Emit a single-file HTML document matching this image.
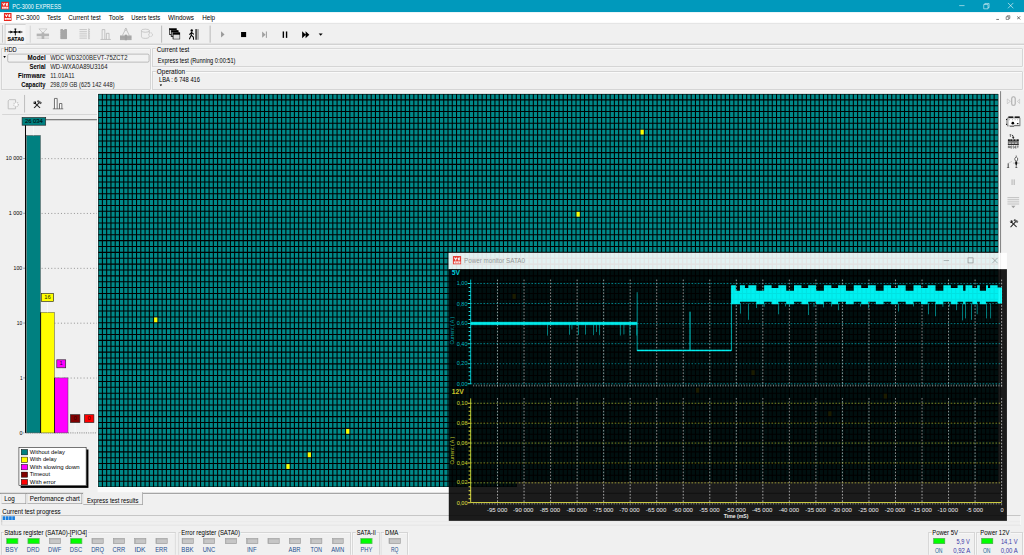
<!DOCTYPE html>
<html><head><meta charset="utf-8"><title>PC-3000 EXPRESS</title>
<style>
html,body{margin:0;padding:0;background:#f0f0f0;}
body{width:1024px;height:555px;overflow:hidden;position:relative;font-family:"Liberation Sans",sans-serif;}
#root{position:absolute;left:0;top:0;width:1920px;height:1040px;transform:scale(0.5333333);transform-origin:0 0;background:#f0f0f0;overflow:hidden;}
#root span{font-family:"Liberation Sans",sans-serif;}
</style></head><body><div id="root">
<div style="position:absolute;left:0.0px;top:0.0px;width:1920.0px;height:23.01px;background:#0099bc;"></div>
<svg style="position:absolute;left:2.06px;top:3.19px;" width="15.38" height="15.19" viewBox="0 0 16 16"><rect x="0" y="0" width="16" height="16" rx="0.800" fill="#e7261c"/><path d="M2.800 3.200L5.400 6.300M7.800 3L5.400 6.300V8.300M9.400 5.200L13 3.200M12.600 3L11.200 8.300M9.600 7h3.600" stroke="#fff" stroke-width="2.100" fill="none" opacity="0.950"/><rect x="2" y="10.200" width="12.200" height="3.900" fill="#fff" opacity="0.950"/><path d="M5.200 11.200v2.900M8.100 12v2.100M11 11.200v2.900" stroke="#e7261c" stroke-width="0.900"/></svg>
<span style="position:absolute;left:23.44px;transform-origin:0 50%;top:1.5px;line-height:20px;font-size:12.4px;width:111.97px;transform:scaleX(0.8279);color:#fff;white-space:pre;">PC-3000 EXPRESS</span>
<svg style="position:absolute;left:1778.06px;top:-1.41px;" width="138.75" height="23.01" viewBox="0 0 138.75 23"><path d="M20.500 11.5h10" stroke="#fff" stroke-width="1" fill="none"/><path d="M66.5 9.500h8v8h-8zM68.5 9.500v-2h8v8h-2" stroke="#fff" stroke-width="1" fill="none"/><path d="M112 6.500l10 10M122 6.500l-10 10" stroke="#fff" stroke-width="1.1" fill="none"/></svg>
<div style="position:absolute;left:0.0px;top:23.01px;width:1920.0px;height:19.93px;background:#fff;"></div>
<svg style="position:absolute;left:7.31px;top:24.38px;" width="15.0" height="15.37" viewBox="0 0 16 16"><rect x="0" y="0" width="16" height="16" rx="0.800" fill="#e7261c"/><path d="M2.800 3.200L5.400 6.300M7.800 3L5.400 6.300V8.300M9.400 5.200L13 3.200M12.600 3L11.200 8.300M9.600 7h3.600" stroke="#fff" stroke-width="2.100" fill="none" opacity="0.950"/><rect x="2" y="10.200" width="12.200" height="3.900" fill="#fff" opacity="0.950"/><path d="M5.200 11.200v2.900M8.100 12v2.100M11 11.200v2.900" stroke="#e7261c" stroke-width="0.900"/></svg>
<span style="position:absolute;left:30.0px;transform-origin:0 50%;top:22.5px;line-height:20px;font-size:12.4px;width:49.94px;transform:scaleX(0.9003);color:#000;white-space:pre;">PC-3000</span>
<span style="position:absolute;left:88.12px;transform-origin:0 50%;top:22.5px;line-height:20px;font-size:12.4px;width:29.94px;transform:scaleX(0.907);color:#000;white-space:pre;">Tests</span>
<span style="position:absolute;left:128.44px;transform-origin:0 50%;top:22.5px;line-height:20px;font-size:12.4px;width:65.78px;transform:scaleX(0.9407);color:#000;white-space:pre;">Current test</span>
<span style="position:absolute;left:204.38px;transform-origin:0 50%;top:22.5px;line-height:20px;font-size:12.4px;width:29.95px;transform:scaleX(0.9716);color:#000;white-space:pre;">Tools</span>
<span style="position:absolute;left:246.09px;transform-origin:0 50%;top:22.5px;line-height:20px;font-size:12.4px;width:63.01px;transform:scaleX(0.8768);color:#000;white-space:pre;">Users tests</span>
<span style="position:absolute;left:315.0px;transform-origin:0 50%;top:22.5px;line-height:20px;font-size:12.4px;width:51.3px;transform:scaleX(0.9691);color:#000;white-space:pre;">Windows</span>
<span style="position:absolute;left:378.75px;transform-origin:0 50%;top:22.5px;line-height:20px;font-size:12.4px;width:26.5px;transform:scaleX(0.9558);color:#000;white-space:pre;">Help</span>
<svg style="position:absolute;left:1860.0px;top:23.01px;" width="60.0" height="19.93" viewBox="0 0 60 20"><path d="M8 13.500h5" stroke="#333" stroke-width="1.3" fill="none"/><path d="M26.5 8.500h5v5h-5zM28.5 8.500v-2h5v5h-2" stroke="#333" stroke-width="1" fill="none"/><path d="M47 7.500l6 6M53 7.500l-6 6" stroke="#333" stroke-width="1.3" fill="none"/></svg>
<div style="position:absolute;left:0.0px;top:42.94px;width:1920.0px;height:39.56px;background:#f0f0f0;border-top:1px solid #d9d9d9;box-sizing:border-box;"></div>
<div style="position:absolute;left:0.0px;top:82.22px;width:1920.0px;height:1.78px;background:#c0c0c0;"></div>
<div style="position:absolute;left:0.0px;top:84.0px;width:1920.0px;height:2.06px;background:#f9f9f9;"></div>
<div style="position:absolute;left:3.75px;top:46.88px;width:1.13px;height:33.19px;background:#aaa;"></div>
<div style="position:absolute;left:9.38px;top:45.0px;width:38.25px;height:36.75px;background:#f6f6f6;border-left:1px solid #b4b4b4;border-top:1px solid #b4b4b4;box-sizing:border-box;"></div>
<svg style="position:absolute;left:9.38px;top:47.25px;" width="39.38" height="35.25" viewBox="0 0 39.4 35.25"><path d="M6.500 13h26.500" stroke="#000" stroke-width="2.200" fill="none"/><path d="M19.800 7v12.500M18 7.500h3.600" stroke="#000" stroke-width="1.700" fill="none"/><path d="M14.500 13l-4-2.800v5.600zM25 13l4-2.800v5.600z" fill="#000"/><path d="M17.800 11.200h4v3.600h-4z" fill="#000"/></svg>
<span style="position:absolute;left:13.88px;transform-origin:0 50%;top:63.19px;line-height:20px;font-size:10.5px;width:33.87px;transform:scaleX(0.9356);color:#000;white-space:pre;font-weight:bold;-webkit-text-stroke:0.35px #000;">SATA0</span>
<div style="position:absolute;left:55.78px;top:47.62px;width:1.69px;height:32.62px;background:#bdbdbd;"></div>
<div style="position:absolute;left:302.16px;top:47.62px;width:1.69px;height:32.62px;background:#bdbdbd;"></div>
<div style="position:absolute;left:393.28px;top:47.62px;width:1.69px;height:32.62px;background:#bdbdbd;"></div>
<svg style="position:absolute;left:67.5px;top:53.06px;" width="24.94" height="21.19" viewBox="0 0 24.94 21.19"><path d="M5 1h15l-7.500 8z" fill="none" stroke="#b4b4b4" stroke-width="1.2"/><rect x="0.500" y="10" width="24" height="5" fill="#b4b4b4"/><rect x="10" y="8" width="5" height="12" fill="#b4b4b4"/><path d="M1 18.500h23" stroke="#b4b4b4" stroke-width="1.2"/></svg>
<svg style="position:absolute;left:111.75px;top:53.06px;" width="14.63" height="21.19" viewBox="0 0 14.63 21.19"><path d="M0.500 4.500h13.600M0.500 8h13.600M0.500 11.500h13.600M0.500 15h13.600M0.500 18.200h13.600" stroke="#cbcbcb" stroke-width="1"/><rect x="1.200" y="1.500" width="12.400" height="19" rx="1.200" fill="#a6a6a6"/><circle cx="7.300" cy="1.500" r="1.600" fill="#f0f0f0"/></svg>
<svg style="position:absolute;left:147.75px;top:53.06px;" width="21.38" height="21.19" viewBox="0 0 21.38 21.19"><path d="M1 2.500h14M1 6.500h14M1 10.500h14M1 14.500h14M1 18.500h14" stroke="#b4b4b4" stroke-width="1.3"/><path d="M18.500 0v21" stroke="#b4b4b4" stroke-width="1.5"/><path d="M19 2.500h2M19 6.500h2M19 10.500h2M19 14.500h2M19 18.500h2" stroke="#b4b4b4" stroke-width="1.3"/></svg>
<svg style="position:absolute;left:187.5px;top:54.38px;" width="20.62" height="21.19" viewBox="0 0 20.62 21.19"><path d="M3.500 19.500v-18h5v18M11.500 19.500v-11h5v11M0 20h20" stroke="#b0b0b0" stroke-width="1.3" fill="none"/></svg>
<svg style="position:absolute;left:225.38px;top:51.75px;" width="22.12" height="24.38" viewBox="0 0 22.12 24.38"><path d="M11 1.500l-6.500 13M11 1.500l6.500 13M11 0v4" stroke="#a8a8a8" stroke-width="1.200" fill="none"/><circle cx="11" cy="3.500" r="1.700" fill="#f0f0f0" stroke="#a8a8a8" stroke-width="1"/><rect x="0" y="15" width="22" height="7.500" fill="#b2b2b2"/><path d="M0 15.500h22M0 19h22M0 22.500h22" stroke="#8e8e8e" stroke-width="1"/><rect x="9" y="13" width="4" height="11" fill="#a0a0a0"/></svg>
<svg style="position:absolute;left:264.38px;top:53.06px;" width="22.87" height="21.19" viewBox="0 0 22.87 21.19"><path d="M1 4.500v11c0 2 3 3.500 7.500 3.500s7.500-1.500 7.500-3.500v-11" fill="none" stroke="#b4b4b4" stroke-width="1.200"/><ellipse cx="8.500" cy="4.500" rx="7.500" ry="3" fill="none" stroke="#b4b4b4" stroke-width="1.200"/><circle cx="18.500" cy="12" r="3.500" fill="#f0f0f0" stroke="#b4b4b4" stroke-width="1.200" stroke-dasharray="2 1"/></svg>
<svg style="position:absolute;left:316.88px;top:52.5px;" width="21.19" height="21.37" viewBox="0 0 21.19 21.37"><rect x="0.500" y="0.500" width="13" height="11" fill="#fff" stroke="#000" stroke-width="1.400"/><rect x="0.500" y="0.500" width="13" height="3" fill="#000"/><rect x="4" y="4.500" width="13" height="11" fill="#bbb" stroke="#000" stroke-width="1.400"/><rect x="4" y="4.500" width="13" height="3" fill="#000"/><rect x="7.500" y="8.500" width="13" height="12" fill="#ddd" stroke="#000" stroke-width="1.400"/><rect x="7.500" y="8.500" width="13" height="3.500" fill="#000"/></svg>
<svg style="position:absolute;left:354.38px;top:53.62px;" width="20.25" height="21.0" viewBox="0 0 20.25 21.0"><circle cx="5.500" cy="3" r="2.200" fill="#000"/><path d="M5.500 5l-1 7-3.500 7.500M4.500 12l4 3.500 0.500 5M5 7l-4 4M5.500 7l4 3.500" stroke="#000" stroke-width="2" fill="none"/><rect x="12" y="0.500" width="4" height="20" fill="#555"/><rect x="16" y="0.500" width="3" height="20" fill="#aaa"/></svg>
<svg style="position:absolute;left:408.75px;top:52.5px;" width="202.5" height="22.5" viewBox="0 0 202.5 22.5"><path d="M5.500 5.500l6.500 6-6.500 6z" fill="#9a9a9a"/><rect x="43" y="7" width="9.500" height="9.500" fill="#000"/><path d="M82.500 6l6.500 6-6.500 6z" fill="#a0a0a0"/><rect x="89.500" y="6" width="2" height="12" fill="#a0a0a0"/><rect x="121" y="6" width="2.600" height="12" fill="#000"/><rect x="127" y="6" width="2.600" height="12" fill="#000"/><path d="M157.500 5.500l7 6.500-7 6.500zM164 5.500l7 6.500-7 6.500z" fill="#000"/><path d="M188.500 10h7.500l-3.750 4z" fill="#000"/></svg>
<div style="position:absolute;left:1.5px;top:90.75px;width:281.25px;height:77.06px;border:1.400px solid #bdbdbd;box-sizing:border-box;box-shadow:1.200px 1.200px 0 #fdfdfd, inset 1.200px 1.200px 0 #fdfdfd;"></div>
<div style="position:absolute;left:6.56px;top:85.12px;width:27.19px;height:11.25px;background:#f0f0f0;"></div>
<span style="position:absolute;left:8.44px;transform-origin:0 50%;top:82.5px;line-height:20px;font-size:11.8px;width:26.57px;transform:scaleX(0.9168);color:#000;white-space:pre;">HDD</span>
<div style="position:absolute;left:285.38px;top:90.75px;width:1633.12px;height:34.69px;border:1.400px solid #bdbdbd;box-sizing:border-box;box-shadow:1.200px 1.200px 0 #fdfdfd, inset 1.200px 1.200px 0 #fdfdfd;"></div>
<div style="position:absolute;left:292.03px;top:85.12px;width:64.78px;height:11.25px;background:#f0f0f0;"></div>
<span style="position:absolute;left:293.91px;transform-origin:0 50%;top:82.5px;line-height:20px;font-size:11.8px;width:62.65px;transform:scaleX(0.99);color:#000;white-space:pre;">Current test</span>
<div style="position:absolute;left:285.38px;top:134.25px;width:1633.12px;height:33.56px;border:1.400px solid #bdbdbd;box-sizing:border-box;box-shadow:1.200px 1.200px 0 #fdfdfd, inset 1.200px 1.200px 0 #fdfdfd;"></div>
<div style="position:absolute;left:292.03px;top:128.62px;width:56.72px;height:11.25px;background:#f0f0f0;"></div>
<span style="position:absolute;left:293.91px;transform-origin:0 50%;top:124.88px;line-height:20px;font-size:11.8px;width:52.82px;transform:scaleX(1.0221);color:#000;white-space:pre;">Operation</span>
<div style="position:absolute;left:14.25px;top:100.69px;width:266.06px;height:16.12px;border:1.300px solid #8c8c8c;border-radius:3px;box-sizing:border-box;background:#f2f2f2;"></div>
<svg style="position:absolute;left:6.0px;top:105.38px;" width="5.25" height="4.12" viewBox="0 0 5.2 4"><path d="M0 0h5.200l-2.600 3.600z" fill="#000"/></svg>
<span style="position:absolute;left:50.84px;transform-origin:100% 50%;top:97.69px;line-height:20px;font-size:12px;width:35.66px;transform:scaleX(0.979);color:#000;white-space:pre;font-weight:bold;">Model</span>
<span style="position:absolute;left:94.12px;transform-origin:0 50%;top:97.69px;line-height:20px;font-size:12px;width:157.71px;transform:scaleX(0.9261);color:#222;white-space:pre;">WDC WD3200BEVT-75ZCT2</span>
<span style="position:absolute;left:52.81px;transform-origin:100% 50%;top:115.88px;line-height:20px;font-size:12px;width:33.69px;transform:scaleX(0.9349);color:#000;white-space:pre;font-weight:bold;">Serial</span>
<span style="position:absolute;left:94.12px;transform-origin:0 50%;top:115.88px;line-height:20px;font-size:12px;width:115.71px;transform:scaleX(0.9382);color:#222;white-space:pre;">WD-WXA0A89U3164</span>
<span style="position:absolute;left:32.15px;transform-origin:100% 50%;top:132.94px;line-height:20px;font-size:12px;width:54.35px;transform:scaleX(0.9699);color:#000;white-space:pre;font-weight:bold;">Firmware</span>
<span style="position:absolute;left:94.12px;transform-origin:0 50%;top:132.94px;line-height:20px;font-size:12px;width:50.6px;transform:scaleX(0.9224);color:#222;white-space:pre;">11.01A11</span>
<span style="position:absolute;left:35.48px;transform-origin:100% 50%;top:150.0px;line-height:20px;font-size:12px;width:51.02px;transform:scaleX(0.9071);color:#000;white-space:pre;font-weight:bold;">Capacity</span>
<span style="position:absolute;left:94.12px;transform-origin:0 50%;top:150.0px;line-height:20px;font-size:12px;width:136.44px;transform:scaleX(0.8916);color:#222;white-space:pre;">298,09 GB (625 142 448)</span>
<span style="position:absolute;left:295.69px;transform-origin:0 50%;top:103.5px;line-height:20px;font-size:12px;width:166.43px;transform:scaleX(0.8795);color:#000;white-space:pre;">Express test (Running 0:00:51)</span>
<span style="position:absolute;left:297.75px;transform-origin:0 50%;top:139.5px;line-height:20px;font-size:12px;width:86.41px;transform:scaleX(0.9023);color:#000;white-space:pre;">LBA : 6 748 416</span>
<svg style="position:absolute;left:298.69px;top:158.06px;" width="5.25" height="4.13" viewBox="0 0 5.2 4"><path d="M0 0h5.200l-2.600 3.600z" fill="#000"/></svg>
<svg style="position:absolute;left:13.12px;top:183.75px;" width="26.25" height="24.38" viewBox="0 0 14 13"><path d="M1.250 2.700L2.450 1.550H8.600V4.300M1.250 2.700V10.700H8.600V8.600" fill="none" stroke="#b6b6b6" stroke-width="0.800"/><circle cx="9.150" cy="6.350" r="2.300" fill="#f3f3f3" stroke="#c2c2c2" stroke-width="1.200" stroke-dasharray="0.900 0.900"/><circle cx="9.150" cy="6.350" r="0.950" fill="#fdfdfd"/></svg>
<div style="position:absolute;left:45.09px;top:178.12px;width:1.69px;height:33.37px;background:#c0c0c0;"></div>
<svg style="position:absolute;left:60.94px;top:186.56px;" width="18.75" height="16.88" viewBox="0 0 10 9"><path d="M2.920 3.880L7.220 7.980" stroke="#2a2a2a" stroke-width="1.050" stroke-linecap="round" fill="none"/><path d="M6.830 2.700L1.750 8.170" stroke="#2a2a2a" stroke-width="1.050" stroke-linecap="round" fill="none"/><circle cx="2.200" cy="2.950" r="1.350" fill="#000"/><circle cx="1.550" cy="2.250" r="0.750" fill="#f0f0f0"/><path d="M4.900 1.100L8.800 3.550" stroke="#4a4a4a" stroke-width="2" fill="none"/><path d="M5.300 0.900L9.100 3.250" stroke="#9a9a9a" stroke-width="0.500" fill="none"/></svg>
<svg style="position:absolute;left:98.44px;top:183.38px;" width="21.56" height="22.88" viewBox="0 0 11.5 12.2"><path d="M2.200 11.300V0.800H4.900V11.300M7.250 11.300V5.900H9.600V11.300" stroke="#5c5c5c" stroke-width="0.850" fill="#fafafa"/><path d="M0.500 11.300H11" stroke="#5c5c5c" stroke-width="0.850"/></svg>
<div style="position:absolute;left:3.75px;top:213.66px;width:178.5px;height:1.69px;background:#c0c0c0;"></div>
<svg style="position:absolute;left:0.0px;top:215.62px;" width="183.75" height="609.38" viewBox="0 0 183.75 609.38"><path d="M85.69 8.53H183.0" stroke="#383838" stroke-width="1.500" fill="none"/><path d="M182.06 8.53V595.69" stroke="#c4c4c4" stroke-width="1" fill="none"/><path d="M77.94 81.47H181.88" stroke="#5c5c5c" stroke-width="1.150" stroke-dasharray="1.900 4.162" fill="none"/><path d="M43.5 81.19H47.62" stroke="#555" stroke-width="1" fill="none"/><path d="M77.94 184.22H181.88" stroke="#5c5c5c" stroke-width="1.150" stroke-dasharray="1.900 4.162" fill="none"/><path d="M43.5 183.94H47.62" stroke="#555" stroke-width="1" fill="none"/><path d="M77.94 287.16H181.88" stroke="#5c5c5c" stroke-width="1.150" stroke-dasharray="1.900 4.162" fill="none"/><path d="M43.5 286.88H47.62" stroke="#555" stroke-width="1" fill="none"/><path d="M77.94 390.0H181.88" stroke="#5c5c5c" stroke-width="1.150" stroke-dasharray="1.900 4.162" fill="none"/><path d="M43.5 389.72H47.62" stroke="#555" stroke-width="1" fill="none"/><path d="M77.94 492.84H181.88" stroke="#5c5c5c" stroke-width="1.150" stroke-dasharray="1.900 4.162" fill="none"/><path d="M43.5 492.56H47.62" stroke="#555" stroke-width="1" fill="none"/><path d="M43.5 595.69H181.88" stroke="#666" stroke-width="1.400" stroke-dasharray="2 2.200" fill="none"/><rect x="49.69" y="38.06" width="26.06" height="557.62" fill="#008080" stroke="#4a4a4a" stroke-width="0.900"/><rect x="76.69" y="369.75" width="25.31" height="225.94" fill="#ffff00" stroke="#4a4a4a" stroke-width="0.900"/><rect x="102.0" y="492.56" width="25.5" height="103.12" fill="#ff00ff" stroke="#4a4a4a" stroke-width="0.900"/><rect x="75.09" y="369.75" width="1.5" height="225.94" fill="#000"/><rect x="101.25" y="492.56" width="1.31" height="103.12" fill="#000"/><path d="M47.81 17.81V595.69" stroke="#000" stroke-width="1.875" fill="none"/><path d="M62.62 18.75V38.06" stroke="#fff" stroke-width="1" fill="none"/><path d="M89.06 349.31V369.75" stroke="#fff" stroke-width="1" fill="none"/><path d="M114.75 473.63V492.56" stroke="#fff" stroke-width="1" fill="none"/><path d="M140.81 576.19V595.31" stroke="#fff" stroke-width="1" fill="none"/><path d="M167.25 576.19V595.31" stroke="#fff" stroke-width="1" fill="none"/><rect x="41.44" y="4.31" width="44.25" height="14.44" fill="#008080" stroke="#222" stroke-width="1.200"/><rect x="77.44" y="334.31" width="23.06" height="15.0" fill="#ffff00" stroke="#222" stroke-width="1.200"/><rect x="106.5" y="458.63" width="16.69" height="15.0" fill="#ff00ff" stroke="#222" stroke-width="1.200"/><rect x="132.0" y="561.56" width="17.81" height="14.63" fill="#800000" stroke="#222" stroke-width="1.200"/><rect x="158.25" y="561.56" width="17.81" height="14.63" fill="#ff0000" stroke="#222" stroke-width="1.200"/></svg>
<span style="position:absolute;left:46.74px;transform-origin:50% 50%;top:216.75px;line-height:20px;font-size:11px;width:34.65px;transform:scaleX(1.0);color:#001414;white-space:pre;-webkit-text-stroke:0.250px #001414;">26 034</span>
<span style="position:absolute;left:82.85px;transform-origin:50% 50%;top:546.94px;line-height:20px;font-size:11px;width:13.24px;transform:scaleX(1.0);color:#220;white-space:pre;">16</span>
<span style="position:absolute;left:111.78px;transform-origin:50% 50%;top:671.25px;line-height:20px;font-size:11px;width:7.12px;transform:scaleX(1.0);color:#303;white-space:pre;">1</span>
<span style="position:absolute;left:137.85px;transform-origin:50% 50%;top:774.0px;line-height:20px;font-size:11px;width:7.12px;transform:scaleX(1.0);color:#300;white-space:pre;">0</span>
<span style="position:absolute;left:164.1px;transform-origin:50% 50%;top:774.0px;line-height:20px;font-size:11px;width:7.12px;transform:scaleX(1.0);color:#400;white-space:pre;">0</span>
<span style="position:absolute;left:7.97px;transform-origin:100% 50%;top:286.31px;line-height:20px;font-size:11px;width:34.65px;transform:scaleX(0.9251);color:#000;white-space:pre;">10 000</span>
<span style="position:absolute;left:14.09px;transform-origin:100% 50%;top:389.06px;line-height:20px;font-size:11px;width:28.53px;transform:scaleX(0.9195);color:#000;white-space:pre;">1 000</span>
<span style="position:absolute;left:23.27px;transform-origin:100% 50%;top:492.0px;line-height:20px;font-size:11px;width:19.35px;transform:scaleX(0.8786);color:#000;white-space:pre;">100</span>
<span style="position:absolute;left:29.38px;transform-origin:100% 50%;top:594.84px;line-height:20px;font-size:11px;width:13.24px;transform:scaleX(0.8275);color:#000;white-space:pre;">10</span>
<span style="position:absolute;left:35.5px;transform-origin:100% 50%;top:697.69px;line-height:20px;font-size:11px;width:7.12px;transform:scaleX(0.7968);color:#000;white-space:pre;">1</span>
<span style="position:absolute;left:35.5px;transform-origin:100% 50%;top:800.81px;line-height:20px;font-size:11px;width:7.12px;transform:scaleX(0.9194);color:#000;white-space:pre;">0</span>
<div style="position:absolute;left:35.06px;top:839.06px;width:127.31px;height:72.19px;background:#fff;border:1px solid #000;box-sizing:border-box;box-shadow:3.800px 3.800px 0 #000;"></div>
<svg style="position:absolute;left:39.38px;top:841.5px;" width="13.5" height="12.0" viewBox="0 0 13.5 12"><rect x="0.850" y="1" width="11.800" height="10" fill="#008080" stroke="#111" stroke-width="1.100"/></svg>
<span style="position:absolute;left:56.06px;transform-origin:0 50%;top:837.0px;line-height:20px;font-size:11px;width:67.65px;transform:scaleX(0.9819);color:#000;white-space:pre;">Without delay</span>
<svg style="position:absolute;left:39.38px;top:855.56px;" width="13.5" height="12.0" viewBox="0 0 13.5 12"><rect x="0.850" y="1" width="11.800" height="10" fill="#ffff00" stroke="#111" stroke-width="1.100"/></svg>
<span style="position:absolute;left:56.06px;transform-origin:0 50%;top:851.06px;line-height:20px;font-size:11px;width:52.35px;transform:scaleX(0.9749);color:#000;white-space:pre;">With delay</span>
<svg style="position:absolute;left:39.38px;top:869.62px;" width="13.5" height="12.0" viewBox="0 0 13.5 12"><rect x="0.850" y="1" width="11.800" height="10" fill="#ff00ff" stroke="#111" stroke-width="1.100"/></svg>
<span style="position:absolute;left:56.06px;transform-origin:0 50%;top:865.12px;line-height:20px;font-size:11px;width:92.1px;transform:scaleX(1.023);color:#000;white-space:pre;">With slowing down</span>
<svg style="position:absolute;left:39.38px;top:883.69px;" width="13.5" height="12.0" viewBox="0 0 13.5 12"><rect x="0.850" y="1" width="11.800" height="10" fill="#800000" stroke="#111" stroke-width="1.100"/></svg>
<span style="position:absolute;left:56.06px;transform-origin:0 50%;top:879.19px;line-height:20px;font-size:11px;width:40.33px;transform:scaleX(0.9583);color:#000;white-space:pre;">Timeout</span>
<svg style="position:absolute;left:39.38px;top:897.75px;" width="13.5" height="12.0" viewBox="0 0 13.5 12"><rect x="0.850" y="1" width="11.800" height="10" fill="#ff0000" stroke="#111" stroke-width="1.100"/></svg>
<span style="position:absolute;left:56.06px;transform-origin:0 50%;top:893.25px;line-height:20px;font-size:11px;width:49.28px;transform:scaleX(1.0058);color:#000;white-space:pre;">With error</span>
<div style="position:absolute;left:182.44px;top:174.38px;width:1691.81px;height:740.62px;background:#fafafa;"></div>
<svg style="position:absolute;left:184px;top:176px" width="1688" height="737" viewBox="0 0 1688 737"><g transform="translate(0,0.22)"><rect x="0" y="0" width="1688" height="726" fill="#008989"/><rect x="0" y="726" width="784" height="11" fill="#008989"/><path d="M0 0V737M8 0V737M16 0V737M24 0V737M32 0V737M40 0V737M48 0V737M56 0V737M64 0V737M72 0V737M80 0V737M88 0V737M96 0V737M104 0V737M112 0V737M120 0V737M128 0V737M136 0V737M144 0V737M152 0V737M160 0V737M168 0V737M176 0V737M184 0V737M192 0V737M200 0V737M208 0V737M216 0V737M224 0V737M232 0V737M240 0V737M248 0V737M256 0V737M264 0V737M272 0V737M280 0V737M288 0V737M296 0V737M304 0V737M312 0V737M320 0V737M328 0V737M336 0V737M344 0V737M352 0V737M360 0V737M368 0V737M376 0V737M384 0V737M392 0V737M400 0V737M408 0V737M416 0V737M424 0V737M432 0V737M440 0V737M448 0V737M456 0V737M464 0V737M472 0V737M480 0V737M488 0V737M496 0V737M504 0V737M512 0V737M520 0V737M528 0V737M536 0V737M544 0V737M552 0V737M560 0V737M568 0V737M576 0V737M584 0V737M592 0V737M600 0V737M608 0V737M616 0V737M624 0V737M632 0V737M640 0V737M648 0V737M656 0V737M664 0V737M672 0V737M680 0V737M688 0V737M696 0V737M704 0V737M712 0V737M720 0V737M728 0V737M736 0V737M744 0V737M752 0V737M760 0V737M768 0V737M776 0V737M784 0V737M792 0V726M800 0V726M808 0V726M816 0V726M824 0V726M832 0V726M840 0V726M848 0V726M856 0V726M864 0V726M872 0V726M880 0V726M888 0V726M896 0V726M904 0V726M912 0V726M920 0V726M928 0V726M936 0V726M944 0V726M952 0V726M960 0V726M968 0V726M976 0V726M984 0V726M992 0V726M1000 0V726M1008 0V726M1016 0V726M1024 0V726M1032 0V726M1040 0V726M1048 0V726M1056 0V726M1064 0V726M1072 0V726M1080 0V726M1088 0V726M1096 0V726M1104 0V726M1112 0V726M1120 0V726M1128 0V726M1136 0V726M1144 0V726M1152 0V726M1160 0V726M1168 0V726M1176 0V726M1184 0V726M1192 0V726M1200 0V726M1208 0V726M1216 0V726M1224 0V726M1232 0V726M1240 0V726M1248 0V726M1256 0V726M1264 0V726M1272 0V726M1280 0V726M1288 0V726M1296 0V726M1304 0V726M1312 0V726M1320 0V726M1328 0V726M1336 0V726M1344 0V726M1352 0V726M1360 0V726M1368 0V726M1376 0V726M1384 0V726M1392 0V726M1400 0V726M1408 0V726M1416 0V726M1424 0V726M1432 0V726M1440 0V726M1448 0V726M1456 0V726M1464 0V726M1472 0V726M1480 0V726M1488 0V726M1496 0V726M1504 0V726M1512 0V726M1520 0V726M1528 0V726M1536 0V726M1544 0V726M1552 0V726M1560 0V726M1568 0V726M1576 0V726M1584 0V726M1592 0V726M1600 0V726M1608 0V726M1616 0V726M1624 0V726M1632 0V726M1640 0V726M1648 0V726M1656 0V726M1664 0V726M1672 0V726M1680 0V726M1688 0V726M0 0H1688M0 11H1688M0 22H1688M0 33H1688M0 44H1688M0 55H1688M0 66H1688M0 77H1688M0 88H1688M0 99H1688M0 110H1688M0 121H1688M0 132H1688M0 143H1688M0 154H1688M0 165H1688M0 176H1688M0 187H1688M0 198H1688M0 209H1688M0 220H1688M0 231H1688M0 242H1688M0 253H1688M0 264H1688M0 275H1688M0 286H1688M0 297H1688M0 308H1688M0 319H1688M0 330H1688M0 341H1688M0 352H1688M0 363H1688M0 374H1688M0 385H1688M0 396H1688M0 407H1688M0 418H1688M0 429H1688M0 440H1688M0 451H1688M0 462H1688M0 473H1688M0 484H1688M0 495H1688M0 506H1688M0 517H1688M0 528H1688M0 539H1688M0 550H1688M0 561H1688M0 572H1688M0 583H1688M0 594H1688M0 605H1688M0 616H1688M0 627H1688M0 638H1688M0 649H1688M0 660H1688M0 671H1688M0 682H1688M0 693H1688M0 704H1688M0 715H1688M0 726H1688M0 737H784" stroke="#000" stroke-width="2" fill="none" shape-rendering="geometricPrecision"/><rect x="1017" y="67" width="6" height="9" fill="#ffff00"/><rect x="897" y="221" width="6" height="9" fill="#ffff00"/><rect x="105" y="419" width="6" height="9" fill="#ffff00"/><rect x="465" y="628" width="6" height="9" fill="#ffff00"/><rect x="393" y="672" width="6" height="9" fill="#ffff00"/><rect x="353" y="694" width="6" height="9" fill="#ffff00"/><rect x="777" y="375" width="6" height="9" fill="#ffff00"/><rect x="1225" y="518" width="6" height="9" fill="#ffff00"/><rect x="1121" y="551" width="6" height="9" fill="#ffff00"/><rect x="1473" y="562" width="6" height="9" fill="#ffff00"/><rect x="1369" y="595" width="6" height="9" fill="#ffff00"/></g></svg>
<div style="position:absolute;left:1873.12px;top:171.0px;width:1.88px;height:747.75px;background:#f6f6f6;"></div>
<div style="position:absolute;left:1875.0px;top:171.0px;width:1.88px;height:747.75px;background:#878787;"></div>
<svg style="position:absolute;left:1887.19px;top:179.62px;" width="26.25" height="19.13" viewBox="0 0 26.25 19.1"><path d="M1.500 5.500l6 4.500-6 4.500zM25 6l-4.500 4 4.500 4z" fill="none" stroke="#b9b9b9" stroke-width="1.200"/><rect x="10" y="1.500" width="6.500" height="16" rx="3.200" fill="none" stroke="#aaa" stroke-width="2"/></svg>
<svg style="position:absolute;left:1885.31px;top:216.56px;" width="30.0" height="22.5" viewBox="0 0 16 12"><rect x="3" y="0.700" width="5" height="1.700" fill="#000"/><rect x="9.300" y="0.700" width="5.100" height="1.700" fill="#000"/><rect x="2.100" y="2.300" width="12.600" height="7.900" fill="#fff" stroke="#6e6e6e" stroke-width="0.550"/><rect x="0.900" y="3" width="1.150" height="6.400" fill="#9a9a9a"/><rect x="0.800" y="3.200" width="1.100" height="1.100" fill="#000"/><rect x="0.800" y="8.100" width="1.100" height="1.100" fill="#000"/><path d="M2.100 2.300l1.400 1M2.100 10.200l1.500-1.200" stroke="#888" stroke-width="0.500"/><rect x="2.300" y="3.200" width="1.200" height="6" fill="#c8c8c8"/><circle cx="7.500" cy="7.450" r="1.350" fill="#000"/><ellipse cx="12.400" cy="7.850" rx="0.950" ry="0.600" fill="#000"/><path d="M3.600 4h0.800M6.800 4h0.800M9.400 4h0.800M12 4h0.800" stroke="#555" stroke-width="0.550"/><path d="M4.600 10.600H8.800M8.800 9.650H14.500" stroke="#3a3a3a" stroke-width="0.700" fill="none"/><rect x="14.100" y="2.400" width="0.700" height="7.400" fill="#8a8a8a"/></svg>
<svg style="position:absolute;left:1886.25px;top:249.38px;" width="28.12" height="31.88" viewBox="0 0 15 17"><path d="M3.800 2.300L4.500 1.500V4.100" stroke="#222" stroke-width="0.650" fill="none"/><path d="M5.900 2.200Q7.700 2.400 7.400 4.800" stroke="#222" stroke-width="0.900" fill="none"/><path d="M6.200 4.500h2.400l-1.200 1.700z" fill="#000"/><rect x="2" y="6.700" width="10.900" height="5.200" fill="#707070"/><path d="M2.200 7.400h1.700M4.600 7.400h1.700M7.700 7.400h1.700M10.900 7.400h1.900" stroke="#000" stroke-width="1.200"/><path d="M3 10.400h2M6 10.400h2M9 10.400h2.200" stroke="#f2f2f2" stroke-width="0.800"/><rect x="2" y="11.300" width="10.900" height="0.700" fill="#000"/><g fill="none" stroke="#333" stroke-width="0.550"><path d="M2.500 15.300v-2.100h0.900q0.500 0 0.500 0.550t-0.500 0.550h-0.900m0.900 0l0.600 1"/><path d="M6.200 13.200h-1.300v2.100h1.300M4.900 14.250h1.100"/><path d="M8.400 13.500q-0.300-0.350-0.750-0.350-0.650 0-0.650 0.550 0 0.400 0.700 0.550 0.750 0.150 0.750 0.600 0 0.500-0.700 0.500-0.550 0-0.850-0.400"/><path d="M10.600 13.200h-1.300v2.100h1.300M9.300 14.250h1.100"/><path d="M11.100 13.200h1.700M11.950 13.200v2.100"/></g></svg>
<svg style="position:absolute;left:1884.38px;top:288.75px;" width="30.0" height="30.0" viewBox="0 0 16 16"><rect x="8.200" y="8.300" width="6.500" height="1.400" fill="#cdcdcd"/><path d="M11.400 1.200V3" stroke="#333" stroke-width="0.500"/><path d="M11.400 2.800L12.800 4V6.200L11.400 7L10.100 6.200V4Z" fill="#fff" stroke="#222" stroke-width="0.650"/><path d="M10.450 7.300h1.950v2.500l-0.970 1.700l-0.980-1.700z" fill="#111"/><path d="M11.430 11.200V13.300" stroke="#222" stroke-width="0.600"/><ellipse cx="11.550" cy="13.500" rx="1.300" ry="0.480" fill="#222"/><path d="M3.400 9.200V13.300" stroke="#222" stroke-width="0.850"/><ellipse cx="3.300" cy="13.500" rx="1.400" ry="0.480" fill="#222"/><path d="M3.500 9.200L7.200 7.250" stroke="#858585" stroke-width="0.600" stroke-dasharray="0.900 0.450" fill="none"/></svg>
<svg style="position:absolute;left:1896.0px;top:336.19px;" width="7.12" height="11.25" viewBox="0 0 7.1 11.25"><path d="M1.500 0v11.250M5.600 0v11.250" stroke="#9c9c9c" stroke-width="1.500"/></svg>
<svg style="position:absolute;left:1888.12px;top:368.62px;" width="24.38" height="22.13" viewBox="0 0 24.4 22.1"><path d="M1 1.500h22M1 5.500h22M1 9.500h22M1 13.500h22" stroke="#a6a6a6" stroke-width="1.200"/><path d="M8 17h8l-4 4.500z" fill="#a0a0a0"/></svg>
<svg style="position:absolute;left:1891.69px;top:409.88px;" width="18.75" height="16.88" viewBox="0 0 10 9"><path d="M2.920 3.880L7.220 7.980" stroke="#2a2a2a" stroke-width="1.050" stroke-linecap="round" fill="none"/><path d="M6.830 2.700L1.750 8.170" stroke="#2a2a2a" stroke-width="1.050" stroke-linecap="round" fill="none"/><circle cx="2.200" cy="2.950" r="1.350" fill="#000"/><circle cx="1.550" cy="2.250" r="0.750" fill="#f0f0f0"/><path d="M4.900 1.100L8.800 3.550" stroke="#4a4a4a" stroke-width="2" fill="none"/><path d="M5.300 0.900L9.100 3.250" stroke="#9a9a9a" stroke-width="0.500" fill="none"/></svg>
<div style="position:absolute;left:183.0px;top:913.5px;width:1691.25px;height:10.31px;background:#fbfbfb;"></div>
<div style="position:absolute;left:0.0px;top:923.81px;width:155.62px;height:1.88px;background:#8c8c8c;"></div>
<div style="position:absolute;left:266.25px;top:923.81px;width:1608.75px;height:1.88px;background:#8c8c8c;"></div>
<div style="position:absolute;left:267.38px;top:925.69px;width:1607.62px;height:1.5px;background:#fbfbfb;"></div>
<div style="position:absolute;left:3.38px;top:925.69px;width:45.38px;height:18.94px;border:1px solid #dcdcdc;border-top:none;border-right:1.500px solid #858585;border-bottom:1.500px solid #858585;box-sizing:border-box;background:#f0f0f0;"></div>
<div style="position:absolute;left:50.62px;top:925.69px;width:103.5px;height:18.94px;border:1px solid #dcdcdc;border-top:none;border-right:1.500px solid #858585;border-bottom:1.500px solid #858585;box-sizing:border-box;background:#f0f0f0;"></div>
<div style="position:absolute;left:155.62px;top:923.06px;width:111.94px;height:23.25px;background:#f0f0f0;border-left:1px solid #e2e2e2;border-right:1.700px solid #808080;border-bottom:1.700px solid #808080;box-sizing:border-box;"></div>
<span style="position:absolute;left:7.69px;transform-origin:0 50%;top:925.69px;line-height:20px;font-size:12px;width:21.02px;transform:scaleX(0.9833);color:#000;white-space:pre;">Log</span>
<span style="position:absolute;left:56.06px;transform-origin:0 50%;top:925.69px;line-height:20px;font-size:12px;width:95.71px;transform:scaleX(0.9878);color:#000;white-space:pre;">Perfomance chart</span>
<span style="position:absolute;left:162.56px;transform-origin:0 50%;top:928.69px;line-height:20px;font-size:12px;width:105.7px;transform:scaleX(0.9223);color:#000;white-space:pre;">Express test results</span>
<span style="position:absolute;left:4.31px;transform-origin:0 50%;top:948.75px;line-height:20px;font-size:12px;width:113.71px;transform:scaleX(0.9732);color:#000;white-space:pre;">Current test progress</span>
<div style="position:absolute;left:3.0px;top:965.81px;width:1911.19px;height:12.75px;border:1px solid #a2a2a2;border-right-color:#fff;border-bottom-color:#e3e3e3;box-sizing:border-box;"></div>
<div style="position:absolute;left:5.44px;top:968.44px;width:4.78px;height:6.75px;background:#1a7fe0;"></div>
<div style="position:absolute;left:11.34px;top:968.44px;width:4.78px;height:6.75px;background:#1a7fe0;"></div>
<div style="position:absolute;left:17.25px;top:968.44px;width:4.78px;height:6.75px;background:#1a7fe0;"></div>
<div style="position:absolute;left:23.16px;top:968.44px;width:4.78px;height:6.75px;background:#1a7fe0;"></div>
<div style="position:absolute;left:3.0px;top:977.81px;width:1911.19px;height:7.69px;border:1px solid #bcbcbc;border-top:none;border-right-color:#fff;border-bottom-color:#d9d9d9;box-sizing:border-box;"></div>
<div style="position:absolute;left:1.88px;top:998.25px;width:327.0px;height:44.25px;border:1.400px solid #bdbdbd;box-sizing:border-box;box-shadow:1.200px 1.200px 0 #fdfdfd, inset 1.200px 1.200px 0 #fdfdfd;"></div>
<div style="position:absolute;left:6.94px;top:992.81px;width:158.06px;height:11.25px;background:#f0f0f0;"></div>
<span style="position:absolute;left:8.44px;transform-origin:0 50%;top:989.25px;line-height:20px;font-size:12px;width:163.94px;transform:scaleX(0.9516);color:#000;white-space:pre;">Status register (SATA0)-[PIO4]</span>
<div style="position:absolute;left:11.62px;top:1009.13px;width:21.94px;height:10.5px;background:#00ff00;border:1px solid #9a9a9a;box-sizing:border-box;box-shadow:inset 1px 1px 0 rgba(0,0,0,0.18);"></div>
<span style="position:absolute;left:10.31px;transform-origin:0 50%;top:1020.75px;line-height:20px;font-size:12px;width:25.01px;transform:scaleX(0.9838);color:#1f4f8f;white-space:pre;">BSY</span>
<div style="position:absolute;left:51.73px;top:1009.13px;width:21.94px;height:10.5px;background:#00ff00;border:1px solid #9a9a9a;box-sizing:border-box;box-shadow:inset 1px 1px 0 rgba(0,0,0,0.18);"></div>
<span style="position:absolute;left:50.23px;transform-origin:0 50%;top:1020.75px;line-height:20px;font-size:12px;width:27.0px;transform:scaleX(0.9231);color:#1f4f8f;white-space:pre;">DRD</span>
<div style="position:absolute;left:91.84px;top:1009.13px;width:21.94px;height:10.5px;background:#c6c6c6;border:1px solid #9a9a9a;box-sizing:border-box;box-shadow:inset 1px 1px 0 rgba(0,0,0,0.18);"></div>
<span style="position:absolute;left:89.96px;transform-origin:0 50%;top:1020.75px;line-height:20px;font-size:12px;width:28.32px;transform:scaleX(0.9058);color:#1f4f8f;white-space:pre;">DWF</span>
<div style="position:absolute;left:131.94px;top:1009.13px;width:21.94px;height:10.5px;background:#00ff00;border:1px solid #9a9a9a;box-sizing:border-box;box-shadow:inset 1px 1px 0 rgba(0,0,0,0.18);"></div>
<span style="position:absolute;left:130.82px;transform-origin:0 50%;top:1020.75px;line-height:20px;font-size:12px;width:26.34px;transform:scaleX(0.9176);color:#1f4f8f;white-space:pre;">DSC</span>
<div style="position:absolute;left:172.05px;top:1009.13px;width:21.94px;height:10.5px;background:#c6c6c6;border:1px solid #9a9a9a;box-sizing:border-box;box-shadow:inset 1px 1px 0 rgba(0,0,0,0.18);"></div>
<span style="position:absolute;left:170.55px;transform-origin:0 50%;top:1020.75px;line-height:20px;font-size:12px;width:27.67px;transform:scaleX(0.9);color:#1f4f8f;white-space:pre;">DRQ</span>
<div style="position:absolute;left:212.16px;top:1009.13px;width:21.94px;height:10.5px;background:#c6c6c6;border:1px solid #9a9a9a;box-sizing:border-box;box-shadow:inset 1px 1px 0 rgba(0,0,0,0.18);"></div>
<span style="position:absolute;left:210.84px;transform-origin:0 50%;top:1020.75px;line-height:20px;font-size:12px;width:27.0px;transform:scaleX(0.9087);color:#1f4f8f;white-space:pre;">CRR</span>
<div style="position:absolute;left:252.26px;top:1009.13px;width:21.94px;height:10.5px;background:#c6c6c6;border:1px solid #9a9a9a;box-sizing:border-box;box-shadow:inset 1px 1px 0 rgba(0,0,0,0.18);"></div>
<span style="position:absolute;left:252.26px;transform-origin:0 50%;top:1020.75px;line-height:20px;font-size:12px;width:21.0px;transform:scaleX(1.0498);color:#1f4f8f;white-space:pre;">IDK</span>
<div style="position:absolute;left:292.37px;top:1009.13px;width:21.94px;height:10.5px;background:#c6c6c6;border:1px solid #9a9a9a;box-sizing:border-box;box-shadow:inset 1px 1px 0 rgba(0,0,0,0.18);"></div>
<span style="position:absolute;left:291.43px;transform-origin:0 50%;top:1020.75px;line-height:20px;font-size:12px;width:26.34px;transform:scaleX(0.9028);color:#1f4f8f;white-space:pre;">ERR</span>
<div style="position:absolute;left:334.5px;top:998.25px;width:323.62px;height:44.25px;border:1.400px solid #bdbdbd;box-sizing:border-box;box-shadow:1.200px 1.200px 0 #fdfdfd, inset 1.200px 1.200px 0 #fdfdfd;"></div>
<div style="position:absolute;left:338.62px;top:992.81px;width:112.88px;height:11.25px;background:#f0f0f0;"></div>
<span style="position:absolute;left:340.12px;transform-origin:0 50%;top:989.25px;line-height:20px;font-size:12px;width:118.58px;transform:scaleX(0.9345);color:#000;white-space:pre;">Error register (SATA0)</span>
<div style="position:absolute;left:341.25px;top:1009.13px;width:21.94px;height:10.5px;background:#c6c6c6;border:1px solid #9a9a9a;box-sizing:border-box;box-shadow:inset 1px 1px 0 rgba(0,0,0,0.18);"></div>
<span style="position:absolute;left:340.31px;transform-origin:0 50%;top:1020.75px;line-height:20px;font-size:12px;width:25.01px;transform:scaleX(0.9526);color:#1f4f8f;white-space:pre;">BBK</span>
<div style="position:absolute;left:381.43px;top:1009.13px;width:21.94px;height:10.5px;background:#c6c6c6;border:1px solid #9a9a9a;box-sizing:border-box;box-shadow:inset 1px 1px 0 rgba(0,0,0,0.18);"></div>
<span style="position:absolute;left:380.12px;transform-origin:0 50%;top:1020.75px;line-height:20px;font-size:12px;width:27.0px;transform:scaleX(0.9087);color:#1f4f8f;white-space:pre;">UNC</span>
<div style="position:absolute;left:421.61px;top:1009.13px;width:21.94px;height:10.5px;background:#c6c6c6;border:1px solid #9a9a9a;box-sizing:border-box;box-shadow:inset 1px 1px 0 rgba(0,0,0,0.18);"></div>
<div style="position:absolute;left:461.79px;top:1009.13px;width:21.94px;height:10.5px;background:#c6c6c6;border:1px solid #9a9a9a;box-sizing:border-box;box-shadow:inset 1px 1px 0 rgba(0,0,0,0.18);"></div>
<span style="position:absolute;left:463.29px;transform-origin:0 50%;top:1020.75px;line-height:20px;font-size:12px;width:20.33px;transform:scaleX(0.9312);color:#1f4f8f;white-space:pre;">INF</span>
<div style="position:absolute;left:501.98px;top:1009.13px;width:21.94px;height:10.5px;background:#c6c6c6;border:1px solid #9a9a9a;box-sizing:border-box;box-shadow:inset 1px 1px 0 rgba(0,0,0,0.18);"></div>
<div style="position:absolute;left:542.16px;top:1009.13px;width:21.94px;height:10.5px;background:#c6c6c6;border:1px solid #9a9a9a;box-sizing:border-box;box-shadow:inset 1px 1px 0 rgba(0,0,0,0.18);"></div>
<span style="position:absolute;left:541.41px;transform-origin:0 50%;top:1020.75px;line-height:20px;font-size:12px;width:25.68px;transform:scaleX(0.9119);color:#1f4f8f;white-space:pre;">ABR</span>
<div style="position:absolute;left:582.34px;top:1009.13px;width:21.94px;height:10.5px;background:#c6c6c6;border:1px solid #9a9a9a;box-sizing:border-box;box-shadow:inset 1px 1px 0 rgba(0,0,0,0.18);"></div>
<span style="position:absolute;left:581.96px;transform-origin:0 50%;top:1020.75px;line-height:20px;font-size:12px;width:26.11px;transform:scaleX(0.8661);color:#1f4f8f;white-space:pre;">TON</span>
<div style="position:absolute;left:622.52px;top:1009.13px;width:21.94px;height:10.5px;background:#c6c6c6;border:1px solid #9a9a9a;box-sizing:border-box;box-shadow:inset 1px 1px 0 rgba(0,0,0,0.18);"></div>
<span style="position:absolute;left:620.83px;transform-origin:0 50%;top:1020.75px;line-height:20px;font-size:12px;width:27.67px;transform:scaleX(0.914);color:#1f4f8f;white-space:pre;">AMN</span>
<div style="position:absolute;left:660.94px;top:998.25px;width:51.19px;height:44.25px;border:1.400px solid #bdbdbd;box-sizing:border-box;box-shadow:1.200px 1.200px 0 #fdfdfd, inset 1.200px 1.200px 0 #fdfdfd;"></div>
<div style="position:absolute;left:667.12px;top:992.81px;width:38.81px;height:11.25px;background:#f0f0f0;"></div>
<span style="position:absolute;left:668.62px;transform-origin:0 50%;top:989.25px;line-height:20px;font-size:12px;width:41.23px;transform:scaleX(0.8903);color:#000;white-space:pre;">SATA-II</span>
<div style="position:absolute;left:676.31px;top:1009.13px;width:21.94px;height:10.5px;background:#00ff00;border:1px solid #9a9a9a;box-sizing:border-box;box-shadow:inset 1px 1px 0 rgba(0,0,0,0.18);"></div>
<span style="position:absolute;left:675.94px;transform-origin:0 50%;top:1020.75px;line-height:20px;font-size:12px;width:25.68px;transform:scaleX(0.8967);color:#1f4f8f;white-space:pre;">PHY</span>
<div style="position:absolute;left:714.0px;top:998.25px;width:51.0px;height:44.25px;border:1.400px solid #bdbdbd;box-sizing:border-box;box-shadow:1.200px 1.200px 0 #fdfdfd, inset 1.200px 1.200px 0 #fdfdfd;"></div>
<div style="position:absolute;left:720.38px;top:992.81px;width:27.94px;height:11.25px;background:#f0f0f0;"></div>
<span style="position:absolute;left:721.88px;transform-origin:0 50%;top:989.25px;line-height:20px;font-size:12px;width:27.67px;transform:scaleX(0.9351);color:#000;white-space:pre;">DMA</span>
<div style="position:absolute;left:729.38px;top:1009.13px;width:21.94px;height:10.5px;background:#c6c6c6;border:1px solid #9a9a9a;box-sizing:border-box;box-shadow:inset 1px 1px 0 rgba(0,0,0,0.18);"></div>
<span style="position:absolute;left:732.56px;transform-origin:0 50%;top:1020.75px;line-height:20px;font-size:12px;width:19.0px;transform:scaleX(0.7708);color:#1f4f8f;white-space:pre;">RQ</span>
<div style="position:absolute;left:1740.94px;top:998.25px;width:87.19px;height:44.25px;border:1.400px solid #bdbdbd;box-sizing:border-box;box-shadow:1.200px 1.200px 0 #fdfdfd, inset 1.200px 1.200px 0 #fdfdfd;"></div>
<div style="position:absolute;left:1746.94px;top:992.81px;width:51.19px;height:11.25px;background:#f0f0f0;"></div>
<span style="position:absolute;left:1748.44px;transform-origin:0 50%;top:989.25px;line-height:20px;font-size:12px;width:53.03px;transform:scaleX(0.9262);color:#000;white-space:pre;">Power 5V</span>
<div style="position:absolute;left:1749.94px;top:1009.13px;width:21.75px;height:10.87px;background:#00ff00;border:1px solid #8a8a8a;box-sizing:border-box;"></div>
<span style="position:absolute;left:1753.12px;transform-origin:0 50%;top:1022.25px;line-height:20px;font-size:12px;width:19.0px;transform:scaleX(0.7917);color:#1f6a99;white-space:pre;">ON</span>
<span style="position:absolute;left:1790.36px;transform-origin:100% 50%;top:1005.94px;line-height:20px;font-size:12px;width:29.02px;transform:scaleX(0.8766);color:#3a3aa8;white-space:pre;">5,9 V</span>
<span style="position:absolute;left:1784.72px;transform-origin:100% 50%;top:1022.25px;line-height:20px;font-size:12px;width:35.03px;transform:scaleX(0.9366);color:#3a3aa8;white-space:pre;">0,92 A</span>
<div style="position:absolute;left:1830.94px;top:998.25px;width:87.56px;height:44.25px;border:1.400px solid #bdbdbd;box-sizing:border-box;box-shadow:1.200px 1.200px 0 #fdfdfd, inset 1.200px 1.200px 0 #fdfdfd;"></div>
<div style="position:absolute;left:1836.94px;top:992.81px;width:57.75px;height:11.25px;background:#f0f0f0;"></div>
<span style="position:absolute;left:1838.44px;transform-origin:0 50%;top:989.25px;line-height:20px;font-size:12px;width:59.7px;transform:scaleX(0.9327);color:#000;white-space:pre;">Power 12V</span>
<div style="position:absolute;left:1840.12px;top:1009.13px;width:21.75px;height:10.87px;background:#00ff00;border:1px solid #8a8a8a;box-sizing:border-box;"></div>
<span style="position:absolute;left:1843.12px;transform-origin:0 50%;top:1022.25px;line-height:20px;font-size:12px;width:19.0px;transform:scaleX(0.7917);color:#1f6a99;white-space:pre;">ON</span>
<span style="position:absolute;left:1873.31px;transform-origin:100% 50%;top:1005.94px;line-height:20px;font-size:12px;width:35.69px;transform:scaleX(0.8971);color:#3a3aa8;white-space:pre;">14,1 V</span>
<span style="position:absolute;left:1874.35px;transform-origin:100% 50%;top:1022.25px;line-height:20px;font-size:12px;width:35.03px;transform:scaleX(0.9311);color:#3a3aa8;white-space:pre;">0,00 A</span>
<div style="position:absolute;left:840.75px;top:473.91px;width:1047.28px;height:30.84px;background:#fff;opacity:0.885;"></div>
<div id="pw" style="position:absolute;left:840.75px;top:473.06px;width:1047.28px;height:503.62px;opacity:0.885;">
<svg style="position:absolute;left:0;top:0" width="1047.28" height="503.62" viewBox="0 0 1047.28 503.62"><rect x="0" y="31.69" width="1047.28" height="471.93" fill="#000"/><path d="M41.53 58.5H1037.06" stroke="#00b4c0" stroke-width="1.300" stroke-dasharray="3 3" fill="none"/><path d="M41.53 96.11H1037.06" stroke="#00b4c0" stroke-width="1.300" stroke-dasharray="3 3" fill="none"/><path d="M41.53 133.72H1037.06" stroke="#00b4c0" stroke-width="1.300" stroke-dasharray="3 3" fill="none"/><path d="M41.53 171.34H1037.06" stroke="#00b4c0" stroke-width="1.300" stroke-dasharray="3 3" fill="none"/><path d="M41.53 208.95H1037.06" stroke="#00b4c0" stroke-width="1.300" stroke-dasharray="3 3" fill="none"/><path d="M41.53 246.56H1037.06" stroke="#00b4c0" stroke-width="1.300" stroke-dasharray="3 3" fill="none"/><path d="M1037.06 51.19V251.81M1037.06 273.19V468.19" stroke="#e0e0e0" stroke-width="1.300" stroke-dasharray="3 3" fill="none"/><path d="M987.31 51.19V251.81M987.31 273.19V468.19" stroke="#e0e0e0" stroke-width="1.300" stroke-dasharray="3 3" fill="none"/><path d="M937.57 51.19V251.81M937.57 273.19V468.19" stroke="#e0e0e0" stroke-width="1.300" stroke-dasharray="3 3" fill="none"/><path d="M887.82 51.19V251.81M887.82 273.19V468.19" stroke="#e0e0e0" stroke-width="1.300" stroke-dasharray="3 3" fill="none"/><path d="M838.07 51.19V251.81M838.07 273.19V468.19" stroke="#e0e0e0" stroke-width="1.300" stroke-dasharray="3 3" fill="none"/><path d="M788.33 51.19V251.81M788.33 273.19V468.19" stroke="#e0e0e0" stroke-width="1.300" stroke-dasharray="3 3" fill="none"/><path d="M738.58 51.19V251.81M738.58 273.19V468.19" stroke="#e0e0e0" stroke-width="1.300" stroke-dasharray="3 3" fill="none"/><path d="M688.83 51.19V251.81M688.83 273.19V468.19" stroke="#e0e0e0" stroke-width="1.300" stroke-dasharray="3 3" fill="none"/><path d="M639.08 51.19V251.81M639.08 273.19V468.19" stroke="#e0e0e0" stroke-width="1.300" stroke-dasharray="3 3" fill="none"/><path d="M589.34 51.19V251.81M589.34 273.19V468.19" stroke="#e0e0e0" stroke-width="1.300" stroke-dasharray="3 3" fill="none"/><path d="M539.59 51.19V251.81M539.59 273.19V468.19" stroke="#e0e0e0" stroke-width="1.300" stroke-dasharray="3 3" fill="none"/><path d="M489.84 51.19V251.81M489.84 273.19V468.19" stroke="#e0e0e0" stroke-width="1.300" stroke-dasharray="3 3" fill="none"/><path d="M440.09 51.19V251.81M440.09 273.19V468.19" stroke="#e0e0e0" stroke-width="1.300" stroke-dasharray="3 3" fill="none"/><path d="M390.35 51.19V251.81M390.35 273.19V468.19" stroke="#e0e0e0" stroke-width="1.300" stroke-dasharray="3 3" fill="none"/><path d="M340.6 51.19V251.81M340.6 273.19V468.19" stroke="#e0e0e0" stroke-width="1.300" stroke-dasharray="3 3" fill="none"/><path d="M290.85 51.19V251.81M290.85 273.19V468.19" stroke="#e0e0e0" stroke-width="1.300" stroke-dasharray="3 3" fill="none"/><path d="M241.1 51.19V251.81M241.1 273.19V468.19" stroke="#e0e0e0" stroke-width="1.300" stroke-dasharray="3 3" fill="none"/><path d="M191.36 51.19V251.81M191.36 273.19V468.19" stroke="#e0e0e0" stroke-width="1.300" stroke-dasharray="3 3" fill="none"/><path d="M141.61 51.19V251.81M141.61 273.19V468.19" stroke="#e0e0e0" stroke-width="1.300" stroke-dasharray="3 3" fill="none"/><path d="M91.86 51.19V251.81M91.86 273.19V468.19" stroke="#e0e0e0" stroke-width="1.300" stroke-dasharray="3 3" fill="none"/><path d="M41.53 51.19V247.31" stroke="#00e8f0" stroke-width="1.600" fill="none"/><path d="M35.91 58.5H41.53M37.59 66.02H41.53M37.59 73.54H41.53M37.59 81.07H41.53M37.59 88.59H41.53M35.91 96.11H41.53M37.59 103.63H41.53M37.59 111.16H41.53M37.59 118.68H41.53M37.59 126.2H41.53M35.91 133.72H41.53M37.59 141.25H41.53M37.59 148.77H41.53M37.59 156.29H41.53M37.59 163.81H41.53M35.91 171.34H41.53M37.59 178.86H41.53M37.59 186.38H41.53M37.59 193.91H41.53M37.59 201.43H41.53M35.91 208.95H41.53M37.59 216.47H41.53M37.59 224.0H41.53M37.59 231.52H41.53M37.59 239.04H41.53M35.91 246.56H41.53" stroke="#20f4fc" stroke-width="1.900" fill="none"/><path d="M1037.06 248.25V251.62M1032.09 248.25V251.62M1027.11 248.25V251.62M1022.14 248.25V251.62M1017.16 248.25V251.62M1012.19 248.25V251.62M1007.21 248.25V251.62M1002.24 248.25V251.62M997.26 248.25V251.62M992.29 248.25V251.62M987.31 248.25V251.62M982.34 248.25V251.62M977.37 248.25V251.62M972.39 248.25V251.62M967.42 248.25V251.62M962.44 248.25V251.62M957.47 248.25V251.62M952.49 248.25V251.62M947.52 248.25V251.62M942.54 248.25V251.62M937.57 248.25V251.62M932.59 248.25V251.62M927.62 248.25V251.62M922.64 248.25V251.62M917.67 248.25V251.62M912.69 248.25V251.62M907.72 248.25V251.62M902.74 248.25V251.62M897.77 248.25V251.62M892.79 248.25V251.62M887.82 248.25V251.62M882.85 248.25V251.62M877.87 248.25V251.62M872.9 248.25V251.62M867.92 248.25V251.62M862.95 248.25V251.62M857.97 248.25V251.62M853.0 248.25V251.62M848.02 248.25V251.62M843.05 248.25V251.62M838.07 248.25V251.62M833.1 248.25V251.62M828.12 248.25V251.62M823.15 248.25V251.62M818.17 248.25V251.62M813.2 248.25V251.62M808.22 248.25V251.62M803.25 248.25V251.62M798.27 248.25V251.62M793.3 248.25V251.62M788.33 248.25V251.62M783.35 248.25V251.62M778.38 248.25V251.62M773.4 248.25V251.62M768.43 248.25V251.62M763.45 248.25V251.62M758.48 248.25V251.62M753.5 248.25V251.62M748.53 248.25V251.62M743.55 248.25V251.62M738.58 248.25V251.62M733.6 248.25V251.62M728.63 248.25V251.62M723.65 248.25V251.62M718.68 248.25V251.62M713.7 248.25V251.62M708.73 248.25V251.62M703.75 248.25V251.62M698.78 248.25V251.62M693.8 248.25V251.62M688.83 248.25V251.62M683.86 248.25V251.62M678.88 248.25V251.62M673.91 248.25V251.62M668.93 248.25V251.62M663.96 248.25V251.62M658.98 248.25V251.62M654.01 248.25V251.62M649.03 248.25V251.62M644.06 248.25V251.62M639.08 248.25V251.62M634.11 248.25V251.62M629.13 248.25V251.62M624.16 248.25V251.62M619.18 248.25V251.62M614.21 248.25V251.62M609.23 248.25V251.62M604.26 248.25V251.62M599.28 248.25V251.62M594.31 248.25V251.62M589.34 248.25V251.62M584.36 248.25V251.62M579.39 248.25V251.62M574.41 248.25V251.62M569.44 248.25V251.62M564.46 248.25V251.62M559.49 248.25V251.62M554.51 248.25V251.62M549.54 248.25V251.62M544.56 248.25V251.62M539.59 248.25V251.62M534.61 248.25V251.62M529.64 248.25V251.62M524.66 248.25V251.62M519.69 248.25V251.62M514.71 248.25V251.62M509.74 248.25V251.62M504.76 248.25V251.62M499.79 248.25V251.62M494.81 248.25V251.62M489.84 248.25V251.62M484.87 248.25V251.62M479.89 248.25V251.62M474.92 248.25V251.62M469.94 248.25V251.62M464.97 248.25V251.62M459.99 248.25V251.62M455.02 248.25V251.62M450.04 248.25V251.62M445.07 248.25V251.62M440.09 248.25V251.62M435.12 248.25V251.62M430.14 248.25V251.62M425.17 248.25V251.62M420.19 248.25V251.62M415.22 248.25V251.62M410.24 248.25V251.62M405.27 248.25V251.62M400.29 248.25V251.62M395.32 248.25V251.62M390.35 248.25V251.62M385.37 248.25V251.62M380.4 248.25V251.62M375.42 248.25V251.62M370.45 248.25V251.62M365.47 248.25V251.62M360.5 248.25V251.62M355.52 248.25V251.62M350.55 248.25V251.62M345.57 248.25V251.62M340.6 248.25V251.62M335.62 248.25V251.62M330.65 248.25V251.62M325.67 248.25V251.62M320.7 248.25V251.62M315.72 248.25V251.62M310.75 248.25V251.62M305.77 248.25V251.62M300.8 248.25V251.62M295.82 248.25V251.62M290.85 248.25V251.62M285.88 248.25V251.62M280.9 248.25V251.62M275.93 248.25V251.62M270.95 248.25V251.62M265.98 248.25V251.62M261.0 248.25V251.62M256.03 248.25V251.62M251.05 248.25V251.62M246.08 248.25V251.62M241.1 248.25V251.62M236.13 248.25V251.62M231.15 248.25V251.62M226.18 248.25V251.62M221.2 248.25V251.62M216.23 248.25V251.62M211.25 248.25V251.62M206.28 248.25V251.62M201.3 248.25V251.62M196.33 248.25V251.62M191.36 248.25V251.62M186.38 248.25V251.62M181.41 248.25V251.62M176.43 248.25V251.62M171.46 248.25V251.62M166.48 248.25V251.62M161.51 248.25V251.62M156.53 248.25V251.62M151.56 248.25V251.62M146.58 248.25V251.62M141.61 248.25V251.62M136.63 248.25V251.62M131.66 248.25V251.62M126.68 248.25V251.62M121.71 248.25V251.62M116.73 248.25V251.62M111.76 248.25V251.62M106.78 248.25V251.62M101.81 248.25V251.62M96.83 248.25V251.62M91.86 248.25V251.62M86.89 248.25V251.62M81.91 248.25V251.62M76.94 248.25V251.62M71.96 248.25V251.62M66.99 248.25V251.62M62.01 248.25V251.62M57.04 248.25V251.62M52.06 248.25V251.62M47.09 248.25V251.62" stroke="#d8d8d8" stroke-width="1.100" fill="none"/><path d="M41.53 283.12H1037.06" stroke="#c8c828" stroke-width="1.300" stroke-dasharray="3 3" fill="none"/><path d="M41.53 320.44H1037.06" stroke="#c8c828" stroke-width="1.300" stroke-dasharray="3 3" fill="none"/><path d="M41.53 357.75H1037.06" stroke="#c8c828" stroke-width="1.300" stroke-dasharray="3 3" fill="none"/><path d="M41.53 395.06H1037.06" stroke="#c8c828" stroke-width="1.300" stroke-dasharray="3 3" fill="none"/><path d="M41.53 432.37H1037.06" stroke="#c8c828" stroke-width="1.300" stroke-dasharray="3 3" fill="none"/><path d="M41.53 273.94V469.31H1037.06" stroke="#e6e632" stroke-width="1.700" fill="none"/><path d="M35.91 283.12H41.53M37.59 290.59H41.53M37.59 298.05H41.53M37.59 305.51H41.53M37.59 312.98H41.53M35.91 320.44H41.53M37.59 327.9H41.53M37.59 335.36H41.53M37.59 342.82H41.53M37.59 350.29H41.53M35.91 357.75H41.53M37.59 365.21H41.53M37.59 372.67H41.53M37.59 380.14H41.53M37.59 387.6H41.53M35.91 395.06H41.53M37.59 402.53H41.53M37.59 409.99H41.53M37.59 417.45H41.53M37.59 424.91H41.53M35.91 432.37H41.53M37.59 439.84H41.53M37.59 447.3H41.53M37.59 454.76H41.53M37.59 462.22H41.53M35.91 469.69H41.53" stroke="#f0f038" stroke-width="1.900" fill="none"/><path d="M1037.06 470.44V474.38M1032.09 470.44V472.88M1027.11 470.44V472.88M1022.14 470.44V472.88M1017.16 470.44V472.88M1012.19 470.44V472.88M1007.21 470.44V472.88M1002.24 470.44V472.88M997.26 470.44V472.88M992.29 470.44V472.88M987.31 470.44V474.38M982.34 470.44V472.88M977.37 470.44V472.88M972.39 470.44V472.88M967.42 470.44V472.88M962.44 470.44V472.88M957.47 470.44V472.88M952.49 470.44V472.88M947.52 470.44V472.88M942.54 470.44V472.88M937.57 470.44V474.38M932.59 470.44V472.88M927.62 470.44V472.88M922.64 470.44V472.88M917.67 470.44V472.88M912.69 470.44V472.88M907.72 470.44V472.88M902.74 470.44V472.88M897.77 470.44V472.88M892.79 470.44V472.88M887.82 470.44V474.38M882.85 470.44V472.88M877.87 470.44V472.88M872.9 470.44V472.88M867.92 470.44V472.88M862.95 470.44V472.88M857.97 470.44V472.88M853.0 470.44V472.88M848.02 470.44V472.88M843.05 470.44V472.88M838.07 470.44V474.38M833.1 470.44V472.88M828.12 470.44V472.88M823.15 470.44V472.88M818.17 470.44V472.88M813.2 470.44V472.88M808.22 470.44V472.88M803.25 470.44V472.88M798.27 470.44V472.88M793.3 470.44V472.88M788.33 470.44V474.38M783.35 470.44V472.88M778.38 470.44V472.88M773.4 470.44V472.88M768.43 470.44V472.88M763.45 470.44V472.88M758.48 470.44V472.88M753.5 470.44V472.88M748.53 470.44V472.88M743.55 470.44V472.88M738.58 470.44V474.38M733.6 470.44V472.88M728.63 470.44V472.88M723.65 470.44V472.88M718.68 470.44V472.88M713.7 470.44V472.88M708.73 470.44V472.88M703.75 470.44V472.88M698.78 470.44V472.88M693.8 470.44V472.88M688.83 470.44V474.38M683.86 470.44V472.88M678.88 470.44V472.88M673.91 470.44V472.88M668.93 470.44V472.88M663.96 470.44V472.88M658.98 470.44V472.88M654.01 470.44V472.88M649.03 470.44V472.88M644.06 470.44V472.88M639.08 470.44V474.38M634.11 470.44V472.88M629.13 470.44V472.88M624.16 470.44V472.88M619.18 470.44V472.88M614.21 470.44V472.88M609.23 470.44V472.88M604.26 470.44V472.88M599.28 470.44V472.88M594.31 470.44V472.88M589.34 470.44V474.38M584.36 470.44V472.88M579.39 470.44V472.88M574.41 470.44V472.88M569.44 470.44V472.88M564.46 470.44V472.88M559.49 470.44V472.88M554.51 470.44V472.88M549.54 470.44V472.88M544.56 470.44V472.88M539.59 470.44V474.38M534.61 470.44V472.88M529.64 470.44V472.88M524.66 470.44V472.88M519.69 470.44V472.88M514.71 470.44V472.88M509.74 470.44V472.88M504.76 470.44V472.88M499.79 470.44V472.88M494.81 470.44V472.88M489.84 470.44V474.38M484.87 470.44V472.88M479.89 470.44V472.88M474.92 470.44V472.88M469.94 470.44V472.88M464.97 470.44V472.88M459.99 470.44V472.88M455.02 470.44V472.88M450.04 470.44V472.88M445.07 470.44V472.88M440.09 470.44V474.38M435.12 470.44V472.88M430.14 470.44V472.88M425.17 470.44V472.88M420.19 470.44V472.88M415.22 470.44V472.88M410.24 470.44V472.88M405.27 470.44V472.88M400.29 470.44V472.88M395.32 470.44V472.88M390.35 470.44V474.38M385.37 470.44V472.88M380.4 470.44V472.88M375.42 470.44V472.88M370.45 470.44V472.88M365.47 470.44V472.88M360.5 470.44V472.88M355.52 470.44V472.88M350.55 470.44V472.88M345.57 470.44V472.88M340.6 470.44V474.38M335.62 470.44V472.88M330.65 470.44V472.88M325.67 470.44V472.88M320.7 470.44V472.88M315.72 470.44V472.88M310.75 470.44V472.88M305.77 470.44V472.88M300.8 470.44V472.88M295.82 470.44V472.88M290.85 470.44V474.38M285.88 470.44V472.88M280.9 470.44V472.88M275.93 470.44V472.88M270.95 470.44V472.88M265.98 470.44V472.88M261.0 470.44V472.88M256.03 470.44V472.88M251.05 470.44V472.88M246.08 470.44V472.88M241.1 470.44V474.38M236.13 470.44V472.88M231.15 470.44V472.88M226.18 470.44V472.88M221.2 470.44V472.88M216.23 470.44V472.88M211.25 470.44V472.88M206.28 470.44V472.88M201.3 470.44V472.88M196.33 470.44V472.88M191.36 470.44V474.38M186.38 470.44V472.88M181.41 470.44V472.88M176.43 470.44V472.88M171.46 470.44V472.88M166.48 470.44V472.88M161.51 470.44V472.88M156.53 470.44V472.88M151.56 470.44V472.88M146.58 470.44V472.88M141.61 470.44V474.38M136.63 470.44V472.88M131.66 470.44V472.88M126.68 470.44V472.88M121.71 470.44V472.88M116.73 470.44V472.88M111.76 470.44V472.88M106.78 470.44V472.88M101.81 470.44V472.88M96.83 470.44V472.88M91.86 470.44V474.38M86.89 470.44V472.88M81.91 470.44V472.88M76.94 470.44V472.88M71.96 470.44V472.88M66.99 470.44V472.88M62.01 470.44V472.88M57.04 470.44V472.88M52.06 470.44V472.88M47.09 470.44V472.88" stroke="#ddd" stroke-width="1" fill="none"/><rect x="41.63" y="130.88" width="312.0" height="5.06" fill="#00ffff" opacity="1"/><rect x="41.63" y="129.94" width="312.0" height="6.94" fill="#00ffff" opacity="0.35"/><rect x="184.86" y="135.37" width="1.16" height="20.82" fill="#00ffff" opacity="0.8"/><rect x="225.92" y="135.37" width="1.16" height="19.32" fill="#00ffff" opacity="0.8"/><rect x="230.79" y="135.37" width="1.17" height="9.38" fill="#00ffff" opacity="0.8"/><rect x="242.98" y="135.37" width="1.16" height="19.69" fill="#00ffff" opacity="0.8"/><rect x="256.48" y="135.37" width="1.16" height="18.94" fill="#00ffff" opacity="0.8"/><rect x="271.48" y="135.37" width="1.16" height="20.07" fill="#00ffff" opacity="0.8"/><rect x="276.73" y="135.37" width="1.16" height="14.07" fill="#00ffff" opacity="0.8"/><rect x="282.17" y="135.37" width="1.16" height="20.07" fill="#00ffff" opacity="0.8"/><rect x="321.36" y="135.37" width="1.16" height="20.63" fill="#00ffff" opacity="0.8"/><rect x="328.29" y="135.37" width="1.17" height="18.75" fill="#00ffff" opacity="0.8"/><rect x="339.54" y="135.37" width="1.17" height="20.82" fill="#00ffff" opacity="0.8"/><rect x="352.48" y="135.37" width="1.16" height="20.63" fill="#00ffff" opacity="0.8"/><rect x="352.88" y="75.0" width="1.5" height="110.06" fill="#00ffff" opacity="0.75"/><rect x="353.63" y="183.0" width="176.43" height="2.34" fill="#00ffff" opacity="1"/><rect x="353.63" y="182.25" width="176.43" height="3.75" fill="#00ffff" opacity="0.3"/><rect x="451.88" y="111.37" width="1.87" height="72.75" fill="#00ffff" opacity="0.9"/><rect x="529.5" y="63.19" width="1.5" height="121.68" fill="#00ffff" opacity="0.85"/><path d="M530.06 61.88L538.69 61.88L538.69 72.19L546.38 72.19L546.38 61.88L555.75 61.88L555.75 66.94L562.13 66.94L562.13 61.88L577.13 61.88L577.13 72.19L591.75 72.19L591.75 61.88L605.81 61.88L605.81 66.94L618.38 66.94L618.38 61.88L633.13 61.88L633.13 72.19L647.76 72.19L647.76 61.88L661.82 61.88L661.82 66.94L674.38 66.94L674.38 61.88L689.14 61.88L689.14 72.19L703.76 72.19L703.76 61.88L717.83 61.88L717.83 66.94L730.39 66.94L730.39 61.88L745.14 61.88L745.14 72.19L759.77 72.19L759.77 61.88L773.83 61.88L773.83 66.94L786.39 66.94L786.39 61.88L801.15 61.88L801.15 72.19L815.78 72.19L815.78 61.88L829.84 61.88L829.84 66.94L842.4 66.94L842.4 61.88L857.16 61.88L857.16 72.19L871.78 72.19L871.78 61.88L885.84 61.88L885.84 66.94L898.41 66.94L898.41 61.88L913.16 61.88L913.16 72.19L927.79 72.19L927.79 61.88L941.85 61.88L941.85 66.94L954.41 66.94L954.41 61.88L964.88 61.88L964.88 72.19L969.38 72.19L969.38 61.88L982.13 61.88L982.13 66.94L991.12 66.94L991.12 61.88L996.19 61.88L996.19 72.19L1007.81 72.19L1007.81 61.88L1011.56 61.88L1011.56 66.94L1015.5 66.94L1015.5 61.88L1029.56 61.88L1029.56 66.19L1037.81 66.19L1037.81 96.19L1029.56 96.19L1029.56 92.62L1015.5 92.62L1015.5 92.62L1011.56 92.62L1011.56 92.62L1007.81 92.62L1007.81 97.69L996.19 97.69L996.19 92.62L991.12 92.62L991.12 97.69L982.13 97.69L982.13 92.62L969.38 92.62L969.38 97.69L964.88 97.69L964.88 92.62L954.41 92.62L954.41 97.69L941.85 97.69L941.85 92.62L927.79 92.62L927.79 97.69L913.16 97.69L913.16 92.62L898.41 92.62L898.41 97.69L885.84 97.69L885.84 92.62L871.78 92.62L871.78 97.69L857.16 97.69L857.16 92.62L842.4 92.62L842.4 97.69L829.84 97.69L829.84 92.62L815.78 92.62L815.78 97.69L801.15 97.69L801.15 92.62L786.39 92.62L786.39 97.69L773.83 97.69L773.83 92.62L759.77 92.62L759.77 97.69L745.14 97.69L745.14 92.62L730.39 92.62L730.39 97.69L717.83 97.69L717.83 92.62L703.76 92.62L703.76 97.69L689.14 97.69L689.14 92.62L674.38 92.62L674.38 97.69L661.82 97.69L661.82 92.62L647.76 92.62L647.76 97.69L633.13 97.69L633.13 92.62L618.38 92.62L618.38 97.69L605.81 97.69L605.81 92.62L591.75 92.62L591.75 97.69L577.13 97.69L577.13 92.62L562.13 92.62L562.13 92.62L555.75 92.62L555.75 92.62L546.38 92.62L546.38 97.69L538.69 97.69L538.69 97.69L530.06 97.69Z" fill="#00ffff"/><rect x="546.73" y="96.0" width="1.16" height="18.94" fill="#00ffff" opacity="0.8"/><rect x="562.11" y="96.0" width="1.16" height="30.56" fill="#00ffff" opacity="0.8"/><rect x="576.54" y="96.0" width="1.17" height="8.44" fill="#00ffff" opacity="0.8"/><rect x="591.17" y="96.0" width="1.16" height="6.19" fill="#00ffff" opacity="0.8"/><rect x="618.54" y="96.0" width="1.17" height="20.25" fill="#00ffff" opacity="0.8"/><rect x="630.92" y="96.0" width="1.16" height="5.62" fill="#00ffff" opacity="0.8"/><rect x="638.61" y="96.0" width="1.16" height="6.19" fill="#00ffff" opacity="0.8"/><rect x="674.42" y="96.0" width="1.16" height="21.56" fill="#00ffff" opacity="0.8"/><rect x="684.73" y="96.0" width="1.16" height="6.19" fill="#00ffff" opacity="0.8"/><rect x="702.54" y="96.0" width="1.17" height="7.31" fill="#00ffff" opacity="0.8"/><rect x="717.92" y="96.0" width="1.16" height="5.62" fill="#00ffff" opacity="0.8"/><rect x="730.86" y="96.0" width="1.16" height="12.56" fill="#00ffff" opacity="0.8"/><rect x="771.92" y="96.0" width="1.16" height="5.62" fill="#00ffff" opacity="0.8"/><rect x="787.11" y="96.0" width="1.16" height="8.44" fill="#00ffff" opacity="0.8"/><rect x="843.17" y="96.0" width="1.16" height="15.0" fill="#00ffff" opacity="0.8"/><rect x="871.29" y="96.0" width="1.17" height="5.62" fill="#00ffff" opacity="0.8"/><rect x="899.42" y="96.0" width="1.16" height="20.25" fill="#00ffff" opacity="0.8"/><rect x="912.36" y="96.0" width="1.16" height="24.0" fill="#00ffff" opacity="0.8"/><rect x="926.42" y="96.0" width="1.16" height="6.19" fill="#00ffff" opacity="0.8"/><rect x="939.17" y="96.0" width="1.16" height="5.62" fill="#00ffff" opacity="0.8"/><rect x="952.11" y="96.0" width="1.16" height="12.56" fill="#00ffff" opacity="0.8"/><rect x="963.54" y="96.0" width="1.17" height="31.69" fill="#00ffff" opacity="0.8"/><rect x="968.79" y="96.0" width="1.17" height="27.94" fill="#00ffff" opacity="0.8"/><rect x="980.23" y="96.0" width="1.16" height="30.56" fill="#00ffff" opacity="0.8"/><rect x="990.54" y="96.0" width="1.17" height="20.25" fill="#00ffff" opacity="0.8"/><rect x="1008.36" y="96.0" width="1.16" height="27.94" fill="#00ffff" opacity="0.8"/><rect x="1016.04" y="96.0" width="1.17" height="27.94" fill="#00ffff" opacity="0.8"/></svg>
<svg style="position:absolute;left:8.06px;top:7.31px;" width="15.94" height="15.94" viewBox="0 0 16 16"><rect x="0" y="0" width="16" height="16" rx="0.800" fill="#e7261c"/><path d="M2.800 3.200L5.400 6.300M7.800 3L5.400 6.300V8.300M9.400 5.200L13 3.200M12.600 3L11.200 8.300M9.600 7h3.600" stroke="#fff" stroke-width="2.100" fill="none" opacity="0.950"/><rect x="2" y="10.200" width="12.200" height="3.900" fill="#fff" opacity="0.950"/><path d="M5.200 11.200v2.900M8.100 12v2.100M11 11.200v2.900" stroke="#e7261c" stroke-width="0.900"/></svg>
<span style="position:absolute;left:29.25px;transform-origin:0 50%;top:6.75px;line-height:20px;font-size:12.4px;width:121.83px;transform:scaleX(0.9466);color:#8c8c8c;white-space:pre;">Power monitor SATA0</span>
<svg style="position:absolute;left:921.75px;top:5.06px;" width="112.5" height="20.62" viewBox="0 0 112.5 20.6"><path d="M6.500 10.500h10" stroke="#6c7474" stroke-width="1" fill="none"/><rect x="52" y="5.500" width="9.500" height="9.500" stroke="#6c7474" stroke-width="1" fill="none"/><path d="M97.500 5.500l10 10M107.500 5.500l-10 10" stroke="#6c7474" stroke-width="1" fill="none"/></svg>
<span style="position:absolute;left:6.56px;transform-origin:0 50%;top:29.44px;line-height:20px;font-size:12.5px;width:16.29px;transform:scaleX(1.0178);color:#00dce8;white-space:pre;font-weight:bold;">5V</span>
<span style="position:absolute;left:6.56px;transform-origin:0 50%;top:251.06px;line-height:20px;font-size:12.5px;width:23.24px;transform:scaleX(1.0116);color:#e8dc28;white-space:pre;font-weight:bold;">12V</span>
<span style="position:absolute;left:13.62px;transform-origin:100% 50%;top:48.0px;line-height:20px;font-size:11.5px;width:23.38px;transform:scaleX(0.8963);color:#00c0cc;white-space:pre;">1,00</span>
<span style="position:absolute;left:13.62px;transform-origin:100% 50%;top:85.61px;line-height:20px;font-size:11.5px;width:23.38px;transform:scaleX(0.8963);color:#00c0cc;white-space:pre;">0,80</span>
<span style="position:absolute;left:13.62px;transform-origin:100% 50%;top:123.22px;line-height:20px;font-size:11.5px;width:23.38px;transform:scaleX(0.8963);color:#00c0cc;white-space:pre;">0,60</span>
<span style="position:absolute;left:13.62px;transform-origin:100% 50%;top:160.84px;line-height:20px;font-size:11.5px;width:23.38px;transform:scaleX(0.8963);color:#00c0cc;white-space:pre;">0,40</span>
<span style="position:absolute;left:13.62px;transform-origin:100% 50%;top:198.45px;line-height:20px;font-size:11.5px;width:23.38px;transform:scaleX(0.8963);color:#00c0cc;white-space:pre;">0,20</span>
<span style="position:absolute;left:13.62px;transform-origin:100% 50%;top:236.06px;line-height:20px;font-size:11.5px;width:23.38px;transform:scaleX(0.8963);color:#00c0cc;white-space:pre;">0,00</span>
<span style="position:absolute;left:13.62px;transform-origin:100% 50%;top:272.06px;line-height:20px;font-size:11.5px;width:23.38px;transform:scaleX(0.8963);color:#e2e22e;white-space:pre;">0,10</span>
<span style="position:absolute;left:13.62px;transform-origin:100% 50%;top:309.37px;line-height:20px;font-size:11.5px;width:23.38px;transform:scaleX(0.8963);color:#e2e22e;white-space:pre;">0,08</span>
<span style="position:absolute;left:13.62px;transform-origin:100% 50%;top:346.69px;line-height:20px;font-size:11.5px;width:23.38px;transform:scaleX(0.8963);color:#e2e22e;white-space:pre;">0,06</span>
<span style="position:absolute;left:13.62px;transform-origin:100% 50%;top:384.0px;line-height:20px;font-size:11.5px;width:23.38px;transform:scaleX(0.8963);color:#e2e22e;white-space:pre;">0,04</span>
<span style="position:absolute;left:13.62px;transform-origin:100% 50%;top:421.31px;line-height:20px;font-size:11.5px;width:23.38px;transform:scaleX(0.8963);color:#e2e22e;white-space:pre;">0,02</span>
<span style="position:absolute;left:13.62px;transform-origin:100% 50%;top:458.62px;line-height:20px;font-size:11.5px;width:23.38px;transform:scaleX(0.8963);color:#e2e22e;white-space:pre;">0,00</span>
<span style="position:absolute;left:971.0px;transform-origin:0 50%;top:472.78px;line-height:20px;font-size:11.5px;width:33.61px;transform:scaleX(0.9545);color:#f0f0f0;white-space:pre;">-5 000</span>
<span style="position:absolute;left:917.69px;transform-origin:0 50%;top:472.78px;line-height:20px;font-size:11.5px;width:40.0px;transform:scaleX(0.9806);color:#f0f0f0;white-space:pre;">-10 000</span>
<span style="position:absolute;left:867.94px;transform-origin:0 50%;top:472.78px;line-height:20px;font-size:11.5px;width:40.0px;transform:scaleX(0.9806);color:#f0f0f0;white-space:pre;">-15 000</span>
<span style="position:absolute;left:818.2px;transform-origin:0 50%;top:472.78px;line-height:20px;font-size:11.5px;width:40.0px;transform:scaleX(0.9806);color:#f0f0f0;white-space:pre;">-20 000</span>
<span style="position:absolute;left:768.45px;transform-origin:0 50%;top:472.78px;line-height:20px;font-size:11.5px;width:40.0px;transform:scaleX(0.9806);color:#f0f0f0;white-space:pre;">-25 000</span>
<span style="position:absolute;left:718.7px;transform-origin:0 50%;top:472.78px;line-height:20px;font-size:11.5px;width:40.0px;transform:scaleX(0.9806);color:#f0f0f0;white-space:pre;">-30 000</span>
<span style="position:absolute;left:668.96px;transform-origin:0 50%;top:472.78px;line-height:20px;font-size:11.5px;width:40.0px;transform:scaleX(0.9806);color:#f0f0f0;white-space:pre;">-35 000</span>
<span style="position:absolute;left:619.21px;transform-origin:0 50%;top:472.78px;line-height:20px;font-size:11.5px;width:40.0px;transform:scaleX(0.9806);color:#f0f0f0;white-space:pre;">-40 000</span>
<span style="position:absolute;left:569.46px;transform-origin:0 50%;top:472.78px;line-height:20px;font-size:11.5px;width:40.0px;transform:scaleX(0.9806);color:#f0f0f0;white-space:pre;">-45 000</span>
<span style="position:absolute;left:519.71px;transform-origin:0 50%;top:472.78px;line-height:20px;font-size:11.5px;width:40.0px;transform:scaleX(0.9806);color:#f0f0f0;white-space:pre;">-50 000</span>
<span style="position:absolute;left:469.97px;transform-origin:0 50%;top:472.78px;line-height:20px;font-size:11.5px;width:40.0px;transform:scaleX(0.9806);color:#f0f0f0;white-space:pre;">-55 000</span>
<span style="position:absolute;left:420.22px;transform-origin:0 50%;top:472.78px;line-height:20px;font-size:11.5px;width:40.0px;transform:scaleX(0.9806);color:#f0f0f0;white-space:pre;">-60 000</span>
<span style="position:absolute;left:370.47px;transform-origin:0 50%;top:472.78px;line-height:20px;font-size:11.5px;width:40.0px;transform:scaleX(0.9806);color:#f0f0f0;white-space:pre;">-65 000</span>
<span style="position:absolute;left:320.72px;transform-origin:0 50%;top:472.78px;line-height:20px;font-size:11.5px;width:40.0px;transform:scaleX(0.9806);color:#f0f0f0;white-space:pre;">-70 000</span>
<span style="position:absolute;left:270.97px;transform-origin:0 50%;top:472.78px;line-height:20px;font-size:11.5px;width:40.0px;transform:scaleX(0.9806);color:#f0f0f0;white-space:pre;">-75 000</span>
<span style="position:absolute;left:221.23px;transform-origin:0 50%;top:472.78px;line-height:20px;font-size:11.5px;width:40.0px;transform:scaleX(0.9806);color:#f0f0f0;white-space:pre;">-80 000</span>
<span style="position:absolute;left:171.48px;transform-origin:0 50%;top:472.78px;line-height:20px;font-size:11.5px;width:40.0px;transform:scaleX(0.9806);color:#f0f0f0;white-space:pre;">-85 000</span>
<span style="position:absolute;left:121.73px;transform-origin:0 50%;top:472.78px;line-height:20px;font-size:11.5px;width:40.0px;transform:scaleX(0.9806);color:#f0f0f0;white-space:pre;">-90 000</span>
<span style="position:absolute;left:71.99px;transform-origin:0 50%;top:472.78px;line-height:20px;font-size:11.5px;width:40.0px;transform:scaleX(0.9806);color:#f0f0f0;white-space:pre;">-95 000</span>
<span style="position:absolute;left:1034.81px;transform-origin:0 50%;top:472.78px;line-height:20px;font-size:11.5px;width:7.4px;transform:scaleX(0.9088);color:#f0f0f0;white-space:pre;">0</span>
<span style="position:absolute;left:516.0px;transform-origin:0 50%;top:485.06px;line-height:20px;font-size:10.5px;width:51.57px;transform:scaleX(0.9121);color:#f0f0f0;white-space:pre;font-weight:bold;">Time (mS)</span>
<span style="position:absolute;left:6.94px;top:147.19px;width:0;height:0;"><span style="position:absolute;left:0;top:0;display:block;white-space:pre;font-size:9px;line-height:10px;color:#00a8b4;transform:translate(-50%,-50%) rotate(-90deg) scaleX(1.063);">Current ( A )</span></span>
<span style="position:absolute;left:6.94px;top:371.62px;width:0;height:0;"><span style="position:absolute;left:0;top:0;display:block;white-space:pre;font-size:9px;line-height:10px;color:#d4d42c;transform:translate(-50%,-50%) rotate(-90deg) scaleX(1.063);">Current ( A )</span></span>
</div>
</div></body></html>
